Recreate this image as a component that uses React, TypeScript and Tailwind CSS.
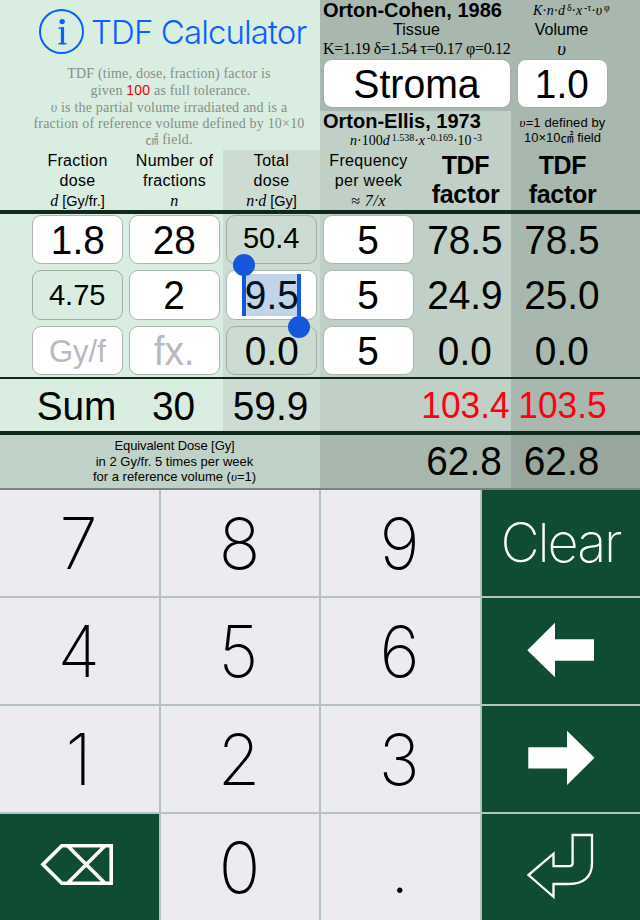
import type { ReactNode } from "react";

const COLS = "grid grid-cols-[126px_97px_97px_97px_94px_129px]";

const CELL = [
  "bg-[#d9ede0] pl-[32px] pr-[3px]",
  "bg-[#d9ede0] px-[3px]",
  "bg-[#ccdcd2] px-[3px]",
  "bg-[#c1d0c6] px-[3px]",
  "bg-[#c1d0c6] pl-[3px]",
  "bg-[#a9b8af] pl-[6px] pr-[32px]",
];

type Entry = {
  text: string;
  kind: "input" | "computed" | "plain";
  className?: string;
  selected?: boolean;
};

const ROWS: { className: string; entries: Entry[] }[] = [
  {
    className: "h-[53px] pt-px pb-[3px]",
    entries: [
      { text: "1.8", kind: "input" },
      { text: "28", kind: "input" },
      { text: "50.4", kind: "computed", className: "text-[30px] pb-[3px]" },
      { text: "5", kind: "input" },
      { text: "78.5", kind: "plain" },
      { text: "78.5", kind: "plain" },
    ],
  },
  {
    className: "h-[56px] py-[3px]",
    entries: [
      { text: "4.75", kind: "computed", className: "text-[30px]" },
      { text: "2", kind: "input" },
      { text: "9.5", kind: "input", selected: true, className: "text-[#06101f]" },
      { text: "5", kind: "input" },
      { text: "24.9", kind: "plain" },
      { text: "25.0", kind: "plain" },
    ],
  },
  {
    className: "h-[54px] pt-[3px] pb-[2px]",
    entries: [
      { text: "Gy/f", kind: "input", className: "text-[32px] text-[#b9b9bf]" },
      { text: "fx.", kind: "input", className: "text-[#b9b9bf]" },
      { text: "0.0", kind: "computed" },
      { text: "5", kind: "input" },
      { text: "0.0", kind: "plain" },
      { text: "0.0", kind: "plain" },
    ],
  },
];

export default function App() {
  return (
    <main className="flex h-[920px] w-[640px] flex-col overflow-hidden bg-[#b4c3c1] font-['Liberation_Sans',Arial,sans-serif] text-black">
      <Header />
      <ColumnTitles />
      <div className="h-[4px] bg-[#10291d]" />
      {ROWS.map((row, i) => (
        <DataRow key={i} className={row.className} entries={row.entries} />
      ))}
      <div className="h-[2px] bg-[#10291d]" />
      <SumRow />
      <div className="h-[4px] bg-[#10291d]" />
      <EquivalentRow />
      <div className="h-[2px] bg-[#7a8583]" />
      <Keypad />
    </main>
  );
}

function Header() {
  return (
    <header className="flex h-[150px]">
      <div className="w-[320px] bg-[#d9ede0]">
        <div className="flex h-[65px] items-start pl-[39px] pt-[9px]">
          <div className="flex size-[45px] items-center justify-center rounded-full border-2 border-[#0a60ff]">
            <InfoGlyph />
          </div>
          <h1 className="ml-[7px] whitespace-nowrap font-['Inter',sans-serif] text-[33px] font-light leading-[46px] tracking-[-0.9px] text-[#0a60ff]">
            TDF Calculator
          </h1>
        </div>
        <div className="flex flex-col items-center whitespace-nowrap pl-[18px] font-['Liberation_Serif',serif] text-[14px] text-[#858f89]">
          <Line className="h-[17px] leading-[17px] tracking-[0.2px]">TDF (time, dose, fraction) factor is</Line>
          <Line className="h-[17px] pl-[3px] leading-[17px] tracking-[0.2px]">
            given <span className="font-['Liberation_Sans',sans-serif] text-[#f00010]">100</span> as full tolerance.
          </Line>
          <Line className="h-[17px] leading-[17px] tracking-[0.2px]">
            <i>υ</i> is the partial volume irradiated and is a
          </Line>
          <Line className="h-[16px] leading-[16px] tracking-[0.2px]">
            fraction of reference volume defined by 10×10
          </Line>
          <Line className="h-[16px] leading-[16px] tracking-[0.2px]">
            <SquareCm /> field.
          </Line>
        </div>
      </div>

      <div className="flex w-[191px] flex-col whitespace-nowrap">
        <div className="flex h-[111px] flex-col bg-[#a9b8af]">
          <h2 className="pl-[3px] text-[20px] font-bold leading-[21px]">Orton-Cohen, 1986</h2>
          <Line className="pl-[2px] text-center text-[16px] leading-[18px] tracking-[0.1px]">Tissue</Line>
          <Line className="pl-[3px] font-['Liberation_Serif',serif] text-[16px] leading-[20px] tracking-[-0.27px]">
            K=1.19 δ=1.54 τ=0.17 φ=0.12
          </Line>
          <div className="ml-[3px] flex h-[49px] w-[188px] items-center justify-center rounded-[9px] border border-[#a2aca6] bg-white pr-px text-[40px]">
            <span className="scale-x-[0.98]">Stroma</span>
          </div>
        </div>
        <div className="h-[39px] bg-[#c1d0c6]">
          <h2 className="pl-[3px] text-[20px] font-bold leading-[21px]">Orton-Ellis, 1973</h2>
          <Line className="pl-[30px] font-['Liberation_Serif',serif] text-[14px] leading-[18px]">
            <i>n</i>·100<i>d</i>
            <Sup>1.538</Sup>·<i>x</i>
            <Sup>-0.169</Sup>·10
            <Sup>-3</Sup>
          </Line>
        </div>
      </div>

      <div className="flex w-[129px] flex-col whitespace-nowrap bg-[#a9b8af]">
        <Line className="pl-[22px] font-['Liberation_Serif',serif] text-[14px] leading-[21px] tracking-[-0.15px]">
          <i>K</i>·<i>n</i>·<i>d</i>
          <Sup>δ</Sup>·<i>x</i>
          <Sup>-τ</Sup>·<i>υ</i>
          <Sup>φ</Sup>
        </Line>
        <Line className="h-[18px] pr-[28px] text-center text-[16px] leading-[18px]">Volume</Line>
        <Line className="h-[20px] pr-[28px] text-center font-['Liberation_Serif',serif] text-[19px] italic leading-[20px]">
          υ
        </Line>
        <div className="ml-[6px] flex h-[49px] w-[91px] items-center justify-center rounded-[9px] border border-[#a2aca6] bg-white pr-px text-[40px]">
          <span className="scale-x-[0.97]">1.0</span>
        </div>
        <div className="pr-[26px] pt-[7px] text-center text-[13px] leading-[15px]">
          <Line className="tracking-[0.1px]">
            <i className="font-['Liberation_Serif',serif]">υ</i>=1 defined by
          </Line>
          <Line>
            10×10
            <SquareCm /> field
          </Line>
        </div>
      </div>
    </header>
  );
}

function ColumnTitles() {
  return (
    <div className={`${COLS} h-[60px] whitespace-nowrap text-center text-[16px] tracking-[0.3px]`}>
      <div className={CELL[0]}>
        <Line className="leading-[21px]">Fraction</Line>
        <Line className="leading-[20px]">dose</Line>
        <Line className="text-[14.5px] leading-[21px] tracking-normal">
          <Var>d</Var> [Gy/fr.]
        </Line>
      </div>
      <div className={CELL[1]}>
        <Line className="leading-[21px]">Number of</Line>
        <Line className="leading-[20px]">fractions</Line>
        <Line className="leading-[20px]">
          <Var>n</Var>
        </Line>
      </div>
      <div className={CELL[2]}>
        <Line className="leading-[21px]">Total</Line>
        <Line className="leading-[19px]">dose</Line>
        <Line className="text-[14.5px] leading-[22px] tracking-normal">
          <Var>n·d</Var> [Gy]
        </Line>
      </div>
      <div className={CELL[3]}>
        <Line className="leading-[21px]">Frequency</Line>
        <Line className="leading-[20px]">per week</Line>
        <Line className="leading-[20px] tracking-[0.5px]">
          <Var>≈ 7/x</Var>
        </Line>
      </div>
      <div className={`${CELL[4]} text-[25px] font-bold leading-[29px] tracking-[-0.3px]`}>
        <Line className="pt-[1px]">TDF</Line>
        <Line>factor</Line>
      </div>
      <div className={`${CELL[5]} text-[25px] font-bold leading-[29px] tracking-[-0.3px]`}>
        <Line className="pt-[1px]">TDF</Line>
        <Line>factor</Line>
      </div>
    </div>
  );
}

const KIND = {
  input: "rounded-[9px] border border-[#a9b5ae] bg-white",
  computed: "rounded-[9px] border border-[#9eaea5]",
  plain: "pr-[2px]",
};

function DataRow({ className, entries }: { className: string; entries: Entry[] }) {
  return (
    <div className={COLS}>
      {entries.map((entry, i) => (
        <div key={i} className={`${CELL[i]} ${className}`}>
          <div
            className={`relative flex h-full items-center justify-center leading-none ${KIND[entry.kind]} ${
              entry.className?.includes("text-[3") ? "" : "text-[40px]"
            } ${entry.className ?? ""}`}
          >
            {entry.selected && <SelectionHandles />}
            <span className="relative scale-x-[0.97]">{entry.text}</span>
          </div>
        </div>
      ))}
    </div>
  );
}

function SelectionHandles() {
  return (
    <>
      <div className="absolute left-[15px] top-[3px] h-[42px] w-[59px] border-x-[4px] border-[#1457da] bg-[#c1d4e8]" />
      <div className="absolute left-[6px] top-[-17px] z-10 size-[22px] rounded-full bg-[#1457da]" />
      <div className="absolute left-[61px] top-[45px] z-10 size-[22px] rounded-full bg-[#1457da]" />
    </>
  );
}

function SumRow() {
  const values = ["Sum", "30", "59.9", "", "103.4", "103.5"];
  return (
    <div className={`${COLS} h-[52px] text-center text-[40px] leading-[54px]`}>
      {values.map((value, i) => (
        <div key={i} className={`${CELL[i]} h-[52px] ${i > 3 ? "text-[36px] text-[#ff0010]" : ""}`}>
          <div className={i > 3 ? "scale-x-[0.98]" : "scale-x-[0.97] pr-[2px]"}>{value}</div>
        </div>
      ))}
    </div>
  );
}

function EquivalentRow() {
  return (
    <div className="grid h-[53px] grid-cols-[320px_191px_129px] whitespace-nowrap text-center text-[40px] leading-[53px]">
      <div className="bg-[#c0d2c7] pl-[29px] pt-[3px] text-[13px] leading-[15.5px]">
        <Line className="tracking-[-0.1px]">Equivalent Dose [Gy]</Line>
        <Line>in 2 Gy/fr. 5 times per week</Line>
        <Line>
          for a reference volume (<i className="font-['Liberation_Serif',serif]">υ</i>=1)
        </Line>
      </div>
      <div className="bg-[#a9b8af] pl-[97px]">
        <div className="scale-x-[0.97]">62.8</div>
      </div>
      <div className="bg-[#98a69d] pl-[5px] pr-[33px]">
        <div className="scale-x-[0.97]">62.8</div>
      </div>
    </div>
  );
}

function Keypad() {
  return (
    <div className="grid h-[430px] grid-cols-[159px_158px_159px_158px] grid-rows-[repeat(4,106px)] gap-[2px]">
      <Key>7</Key>
      <Key>8</Key>
      <Key>9</Key>
      <ActionKey>
        <span className="pr-px font-['Inter',sans-serif] text-[54px] font-[170] tracking-[-2.1px]">Clear</span>
      </ActionKey>
      <Key>4</Key>
      <Key>5</Key>
      <Key>6</Key>
      <ActionKey>
        <KeyIcon>
          <path d="M45.3 52.2 73 24.7V41.3H112V62.7H73V79.2Z" fill="white" />
        </KeyIcon>
      </ActionKey>
      <Key>1</Key>
      <Key>2</Key>
      <Key>3</Key>
      <ActionKey>
        <KeyIcon>
          <path d="M112.5 51.8 85 24.8V41.3H46.3V62.5H85V79Z" fill="white" />
        </KeyIcon>
      </ActionKey>
      <ActionKey>
        <KeyIcon>
          <path
            d="M42 50.4 60.8 31.7H110.2V69.2H60.8ZM66.5 31.7 104 69.2M104 31.7 66.5 69.2"
            stroke="white"
            strokeWidth="3.6"
          />
        </KeyIcon>
      </ActionKey>
      <Key>0</Key>
      <Key>.</Key>
      <ActionKey>
        <KeyIcon>
          <path
            d="M46.5 61 71.5 39.7V52.2H87.5Q90.6 52.2 90.6 49V21H110V49.5C110 63 101 70 87 70H71.5V82.8Z"
            stroke="white"
            strokeWidth="2.3"
          />
        </KeyIcon>
      </ActionKey>
    </div>
  );
}

function Key({ children }: { children: ReactNode }) {
  return (
    <button className="flex items-center justify-center bg-[#ebebf1] pr-[2px] font-['Inter',sans-serif] text-[71px] font-extralight leading-none">
      <span className="scale-x-[0.97]">{children}</span>
    </button>
  );
}

function ActionKey({ children }: { children: ReactNode }) {
  return <button className="flex items-center justify-center bg-[#104b33] leading-none text-white">{children}</button>;
}

function KeyIcon({ children }: { children: ReactNode }) {
  return (
    <svg viewBox="0 0 158 106" className="h-[106px] w-[158px]" fill="none">
      {children}
    </svg>
  );
}

function InfoGlyph() {
  return (
    <svg viewBox="0 0 10 28" className="h-[28px] w-[10px]" fill="#0a60ff">
      <circle cx="5.2" cy="3.6" r="2.7" />
      <rect x="3.9" y="9.3" width="3.2" height="17" />
      <rect x="1.6" y="9.3" width="5.3" height="1.5" />
      <rect x="1.5" y="24.9" width="8" height="1.5" />
    </svg>
  );
}

function Line({ className = "", children }: { className?: string; children: ReactNode }) {
  return <div className={className}>{children}</div>;
}

function Var({ children }: { children: ReactNode }) {
  return <i className="font-['Liberation_Serif',serif] text-[16px] leading-none">{children}</i>;
}

function Sup({ children }: { children: ReactNode }) {
  return <span className="relative top-[-4px] ml-[2px] text-[10px] leading-none">{children}</span>;
}

function SquareCm() {
  return <span className="font-['Noto_Sans_CJK_JP',sans-serif] text-[13px] leading-none">㎠</span>;
}
